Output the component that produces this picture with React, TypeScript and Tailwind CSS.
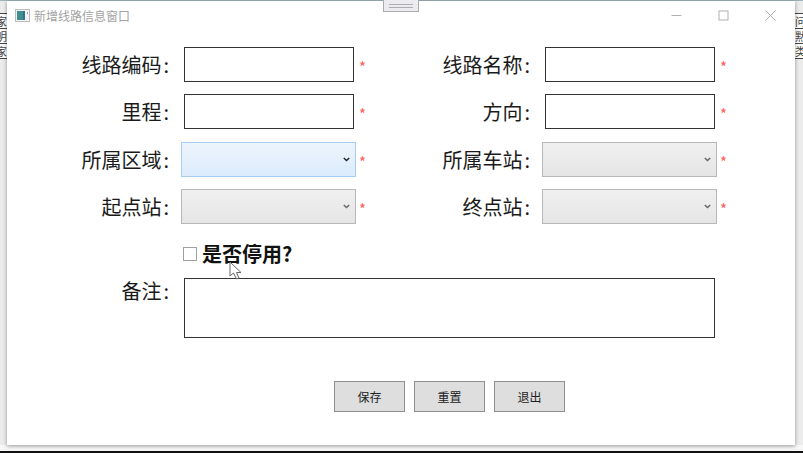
import React from "react";

const font = { fontFamily: '"Noto Sans CJK SC", "Microsoft YaHei", sans-serif' };

function Star({ combo }: { combo?: boolean }) {
  return (
    <span className={`${combo ? "ml-[3px]" : "ml-[5px]"} flex h-[35px] w-[8px] items-center pt-[3px] text-[15px] leading-none text-[#ff5a5a]`}>
      *
    </span>
  );
}

function TextBox({ wide }: { wide?: boolean }) {
  return <div className={`border border-[#333] bg-white ${wide ? "h-[60px] w-[531px]" : "h-[35px] w-[170px]"}`} />;
}

function Chevron({ dark }: { dark?: boolean }) {
  return (
    <svg width="7" height="5" viewBox="0 0 7 5" className="mr-[5px]">
      <path d="M0.8 1 L3.5 3.6 L6.2 1" fill="none" stroke={dark ? "#222" : "#666"} strokeWidth="1.4" />
    </svg>
  );
}

function Combo({ focus }: { focus?: boolean }) {
  return (
    <div
      className={`flex h-[35px] w-[175px] items-center justify-end border ${
        focus
          ? "border-[#a6cdf2] bg-gradient-to-b from-[#ecf4fc] to-[#dcecfc]"
          : "border-[#b8b8b8] bg-gradient-to-b from-[#f0f0f0] to-[#e5e5e5]"
      }`}
    >
      <Chevron dark={focus} />
    </div>
  );
}

function Label({ text, className }: { text: string; className?: string }) {
  return (
    <div className={`w-[162px] whitespace-nowrap text-right text-[20px] text-[#1a1a1a] ${className ?? "leading-none"}`}>
      {text}
      <span className="ml-[2px]">:</span>
    </div>
  );
}

function TextField({ label }: { label: string }) {
  return (
    <div className="flex w-[361px] items-center">
      <Label text={label} />
      <div className="ml-[15px]">
        <TextBox />
      </div>
      <Star />
    </div>
  );
}

function ComboField({ label, focus }: { label: string; focus?: boolean }) {
  return (
    <div className="flex w-[361px] items-center">
      <Label text={label} />
      <div className="ml-[12px]">
        <Combo focus={focus} />
      </div>
      <Star combo />
    </div>
  );
}

function Btn({ label }: { label: string }) {
  return (
    <div className="flex h-[31px] w-[71px] items-center justify-center border border-[#8f8f8f] bg-[#dedede] text-[12px] text-[#222]">
      {label}
    </div>
  );
}

function Edge({ glyphs, side }: { glyphs: string[]; side: "l" | "r" }) {
  return (
    <div className={`flex shrink-0 flex-col overflow-hidden bg-[#ececec] pt-[12px] ${side === "l" ? "w-[7px] items-end" : "w-[8px] items-start"}`}>
      {glyphs.map((g, i) => (
        <div
          key={i}
          className={`flex h-[15px] w-full shrink-0 items-center overflow-hidden border-t border-[#444] bg-white text-[11px] leading-none text-[#444] ${
            side === "l" ? "justify-end" : "justify-start"
          }`}
        >
          {g}
        </div>
      ))}
      <div className="h-[1px] w-full shrink-0 bg-[#444]" />
    </div>
  );
}

export default function App() {
  return (
    <div style={font} className="flex h-[453px] w-[803px] flex-col overflow-hidden bg-[#f7f7f7]">
      <div className="flex h-[445px] shrink-0 border-t border-[#9fb1ba]">
        <Edge side="l" glyphs={["家", "明", "家"]} />
        <div className="relative flex h-[444px] w-[788px] shrink-0 flex-col bg-white shadow-[0_1px_4px_rgba(0,0,0,0.4)]">
          {/* title bar */}
          <div className="flex h-[29px] items-center pl-[8px]">
            <svg width="15" height="13" viewBox="0 0 15 13" className="mr-[4px]">
              <rect x="0.5" y="0.5" width="14" height="12" fill="#f2f2f2" stroke="#bdbdbd" />
              <rect x="2" y="2" width="6" height="9" fill="#3f8f8c" />
              <rect x="8" y="2" width="2" height="9" fill="#3d6f90" />
              <rect x="12" y="3" width="1" height="2" fill="#8fb0a8" />
            </svg>
            <span className="text-[12px] leading-none text-[#a3a3a3]">新增线路信息窗口</span>
            <div className="ml-auto flex h-[29px] items-center">
              <svg width="11" height="11" viewBox="0 0 11 11" className="mr-[36px]">
                <path d="M0.5 5.5H10.5" stroke="#b0b0b0" />
              </svg>
              <svg width="11" height="11" viewBox="0 0 11 11" className="mr-[36px]">
                <rect x="1" y="1" width="9" height="9" fill="none" stroke="#b0b0b0" />
              </svg>
              <svg width="11" height="11" viewBox="0 0 11 11" className="mr-[19px]">
                <path d="M0.5 0.5L10.5 10.5M10.5 0.5L0.5 10.5" stroke="#b0b0b0" />
              </svg>
            </div>
          </div>

          {/* grip overlaying the window top */}
          <div className="absolute left-[376px] top-[-1px] flex h-[12px] w-[36px] items-center justify-center border border-t-0 border-[#ababab] bg-[#ececf0]">
            <div className="h-[4px] w-[24px] border-y border-[#aeaeae]" />
          </div>

          {/* form */}
          <div className="flex flex-col pt-[17px]">
            <div className="flex flex-col">
              <div className="flex">
                <TextField label="线路编码" />
                <TextField label="线路名称" />
              </div>
              <div className="mt-[12px] flex">
                <TextField label="里程" />
                <TextField label="方向" />
              </div>
              <div className="mt-[13px] flex">
                <ComboField label="所属区域" focus />
                <ComboField label="所属车站" />
              </div>
              <div className="mt-[12px] flex">
                <ComboField label="起点站" />
                <ComboField label="终点站" />
              </div>
            </div>

            <div className="mt-[18px] flex h-[24px] items-center pl-[176px]">
              <div className="mr-[5px] h-[14px] w-[14px] border-[1.5px] border-[#a0a0a0] bg-white" />
              <span className="text-[20px] font-bold leading-none text-[#111]">是否停用?</span>
              <svg width="16" height="20" viewBox="0 0 16 20" className="absolute left-[222px] top-[260px]">
                <path d="M1 1 L1 15 L4.5 12 L7.5 18 L10 17 L7.5 11.5 L12 11.5 Z" fill="#fff" stroke="#666" strokeWidth="1" />
              </svg>
            </div>

            <div className="mt-[12px] flex items-start">
              <Label text="备注" className="leading-[26px]" />
              <div className="ml-[15px]">
                <TextBox wide />
              </div>
            </div>

            <div className="mt-[43px] flex gap-[9px] pl-[327px]">
              <Btn label="保存" />
              <Btn label="重置" />
              <Btn label="退出" />
            </div>
          </div>
        </div>
        <Edge side="r" glyphs={["问", "黙", "类"]} />
      </div>
      <div className="mt-auto h-[2px] bg-[#111]" />
    </div>
  );
}
